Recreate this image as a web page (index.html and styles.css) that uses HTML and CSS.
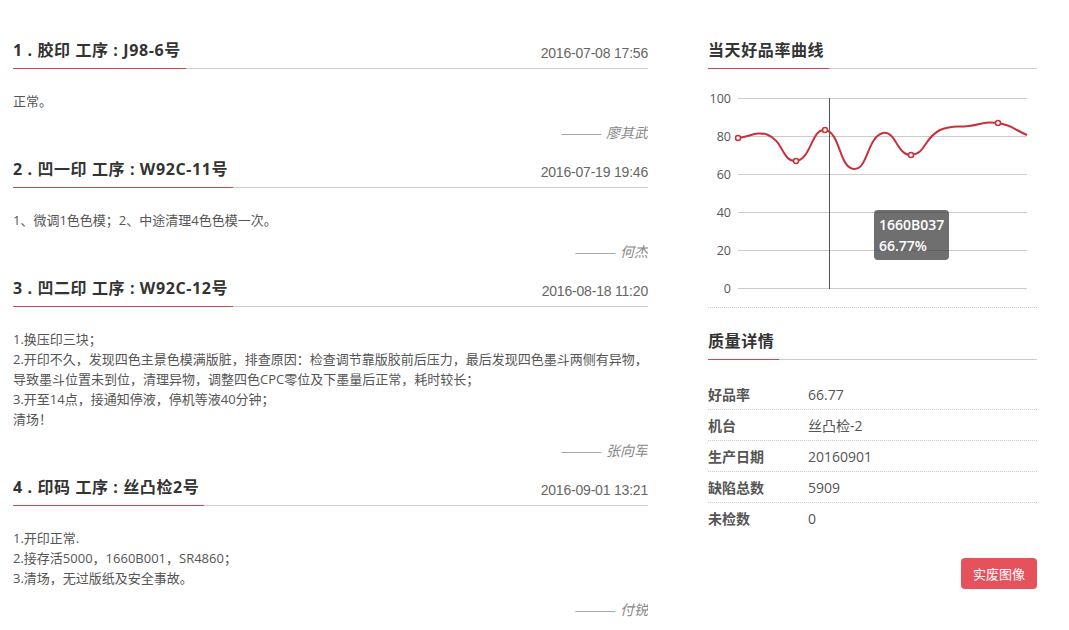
FILE: index.html
```html
<!DOCTYPE html>
<html lang="zh-CN">
<head>
<meta charset="utf-8">
<title>质量记录</title>
<link rel="stylesheet" href="styles.css">
</head>
<body>
<div class="page">
  <div class="col-left">
    <section class="rec">
      <div class="sec-head"><span class="sec-title">1 . 胶印 工序 : J98-6号</span><span class="sec-date">2016-07-08 17:56</span></div>
      <div class="rec-body">正常。</div>
      <div class="rec-author"><span class="dash">———</span> 廖其武</div>
    </section>
    <section class="rec">
      <div class="sec-head"><span class="sec-title">2 . 凹一印 工序 : W92C-11号</span><span class="sec-date">2016-07-19 19:46</span></div>
      <div class="rec-body">1、微调1色色模；2、中途清理4色色模一次。</div>
      <div class="rec-author"><span class="dash">———</span> 何杰</div>
    </section>
    <section class="rec">
      <div class="sec-head"><span class="sec-title">3 . 凹二印 工序 : W92C-12号</span><span class="sec-date">2016-08-18 11:20</span></div>
      <div class="rec-body">1.换压印三块；<br>2.开印不久，发现四色主景色模满版脏，排查原因：检查调节靠版胶前后压力，最后发现四色墨斗两侧有异物，<br>导致墨斗位置未到位，清理异物，调整四色CPC零位及下墨量后正常，耗时较长；<br>3.开至14点，接通知停液，停机等液40分钟；<br>清场！</div>
      <div class="rec-author"><span class="dash">———</span> 张向军</div>
    </section>
    <section class="rec">
      <div class="sec-head"><span class="sec-title">4 . 印码 工序 : 丝凸检2号</span><span class="sec-date">2016-09-01 13:21</span></div>
      <div class="rec-body">1.开印正常.<br>2.接存活5000，1660B001，SR4860；<br>3.清场，无过版纸及安全事故。</div>
      <div class="rec-author"><span class="dash">———</span> 付锐</div>
    </section>
  </div>

  <div class="col-right">
    <div class="sec-head"><span class="sec-title">当天好品率曲线</span></div>
    <div class="chart">
      <svg class="chart-svg" width="329" height="238" viewBox="0 0 329 238">
        <g class="grid">
          <line x1="30" y1="29.5" x2="319" y2="29.5"/>
          <line x1="30" y1="67.5" x2="319" y2="67.5"/>
          <line x1="30" y1="105.5" x2="319" y2="105.5"/>
          <line x1="30" y1="143.5" x2="319" y2="143.5"/>
          <line x1="30" y1="181.5" x2="319" y2="181.5"/>
          <line x1="30" y1="219.5" x2="319" y2="219.5"/>
        </g>
        <g class="axis-label">
          <text x="23" y="34">100</text>
          <text x="23" y="72">80</text>
          <text x="23" y="110">60</text>
          <text x="23" y="148">40</text>
          <text x="23" y="186">20</text>
          <text x="23" y="224">0</text>
        </g>
        <line class="cross" x1="121.5" y1="29" x2="121.5" y2="220"/>
        <path class="curve" d="M30,69 C44.5,67 47,62.5 59,65.5 C75.7,71.6 74,93 88,92 C103,91 103.5,59.1 117,61 C132.5,63.1 131.1,99.2 146,100 C160.1,100.7 158.9,68 175,64 C187.4,61 189.3,86.7 203,86 C217.8,85.2 215.6,69.2 232,61 C244.6,56 248,58.5 261,57 C275.5,55.25 276,51.8 290,54 C305,56.3 304.5,60 319,66"/>
        <g class="marker">
          <circle cx="30" cy="69" r="2.5"/>
          <circle cx="88" cy="92" r="2.5"/>
          <circle cx="117" cy="61" r="2.5"/>
          <circle cx="203" cy="86" r="2.5"/>
          <circle cx="290" cy="54" r="2.5"/>
        </g>
      </svg>
      <div class="tooltip">1660B037<br>66.77%</div>
    </div>

    <div class="detail">
      <div class="sec-head"><span class="sec-title">质量详情</span></div>
      <div class="detail-table">
        <div class="row"><span class="k">好品率</span><span class="v">66.77</span></div>
        <div class="row"><span class="k">机台</span><span class="v">丝凸检-2</span></div>
        <div class="row"><span class="k">生产日期</span><span class="v">20160901</span></div>
        <div class="row"><span class="k">缺陷总数</span><span class="v">5909</span></div>
        <div class="row last"><span class="k">未检数</span><span class="v">0</span></div>
      </div>
      <div class="actions"><button class="btn-red">实废图像</button></div>
    </div>
  </div>
</div>
</body>
</html>
```

FILE: styles.css
```css
html, body {
  margin: 0;
  padding: 0;
  background: #fff;
}
body {
  font-family: "Open Sans", "Noto Sans CJK SC", sans-serif;
  color: #555;
}
.page {
  display: flex;
  gap: 60px;
  padding: 38px 0 0 13px;
}
.col-left {
  width: 635px;
  display: flex;
  flex-direction: column;
  gap: 14px;
}
.col-right {
  width: 329px;
}
.sec-head {
  display: flex;
  justify-content: space-between;
  align-items: flex-end;
  border-bottom: 1px solid #ccc;
}
.sec-title {
  font-size: 16px;
  font-weight: 700;
  line-height: 24px;
  letter-spacing: 0.6px;
  color: #333;
  padding: 0 5px 6px 0;
  border-bottom: 1px solid #cc4a4f;
  margin-bottom: -1px;
  white-space: nowrap;
}
.sec-date {
  font-family: "Liberation Sans", "Noto Sans CJK SC", sans-serif;
  font-size: 14px;
  line-height: 20px;
  letter-spacing: -0.2px;
  color: #666;
  margin-bottom: 5px;
}
.rec-body {
  margin-top: 22px;
  font-size: 13px;
  line-height: 20px;
  color: #555;
  white-space: nowrap;
}
.rec-author {
  margin-top: 12px;
  height: 20px;
  overflow: hidden;
  text-align: right;
  font-size: 14px;
  line-height: 20px;
  font-style: italic;
  color: #888;
}
.dash {
  font-family: "Noto Sans CJK SC", sans-serif;
  font-style: normal;
  color: #666;
  vertical-align: top;
}
.chart {
  position: relative;
  height: 238px;
  border-bottom: 1px dotted #ccc;
}
.chart-svg {
  display: block;
}
.grid line {
  stroke: #ccc;
  stroke-width: 1;
}
.axis-label text {
  font-family: "Open Sans", sans-serif;
  font-size: 12.5px;
  fill: #555;
  text-anchor: end;
}
.cross {
  stroke: #555;
  stroke-width: 1;
}
.curve {
  fill: none;
  stroke: #c8313b;
  stroke-width: 2;
}
.marker circle {
  fill: #fff;
  stroke: #c8313b;
  stroke-width: 1.5;
}
.tooltip {
  position: absolute;
  left: 166px;
  top: 141px;
  width: 65px;
  padding: 4px 5px;
  background: rgba(50, 50, 50, 0.7);
  border-radius: 4px;
  color: #fff;
  font-size: 14px;
  font-weight: 600;
  line-height: 21px;
  white-space: nowrap;
}
.detail {
  margin-top: 21px;
}
.detail-table {
  margin-top: 19px;
}
.row {
  display: flex;
  height: 30px;
  align-items: center;
  border-bottom: 1px dotted #ccc;
}
.row.last {
  border-bottom: none;
}
.k {
  width: 100px;
  font-size: 14px;
  font-weight: 700;
  color: #555;
}
.v {
  font-size: 14px;
  color: #555;
}
.actions {
  margin-top: 25px;
  display: flex;
  justify-content: flex-end;
}
.btn-red {
  width: 76px;
  height: 31px;
  border: none;
  border-radius: 4px;
  background: #e5525c;
  color: #fff;
  font-family: "Open Sans", "Noto Sans CJK SC", sans-serif;
  font-size: 13px;
  padding: 0;
}
```
